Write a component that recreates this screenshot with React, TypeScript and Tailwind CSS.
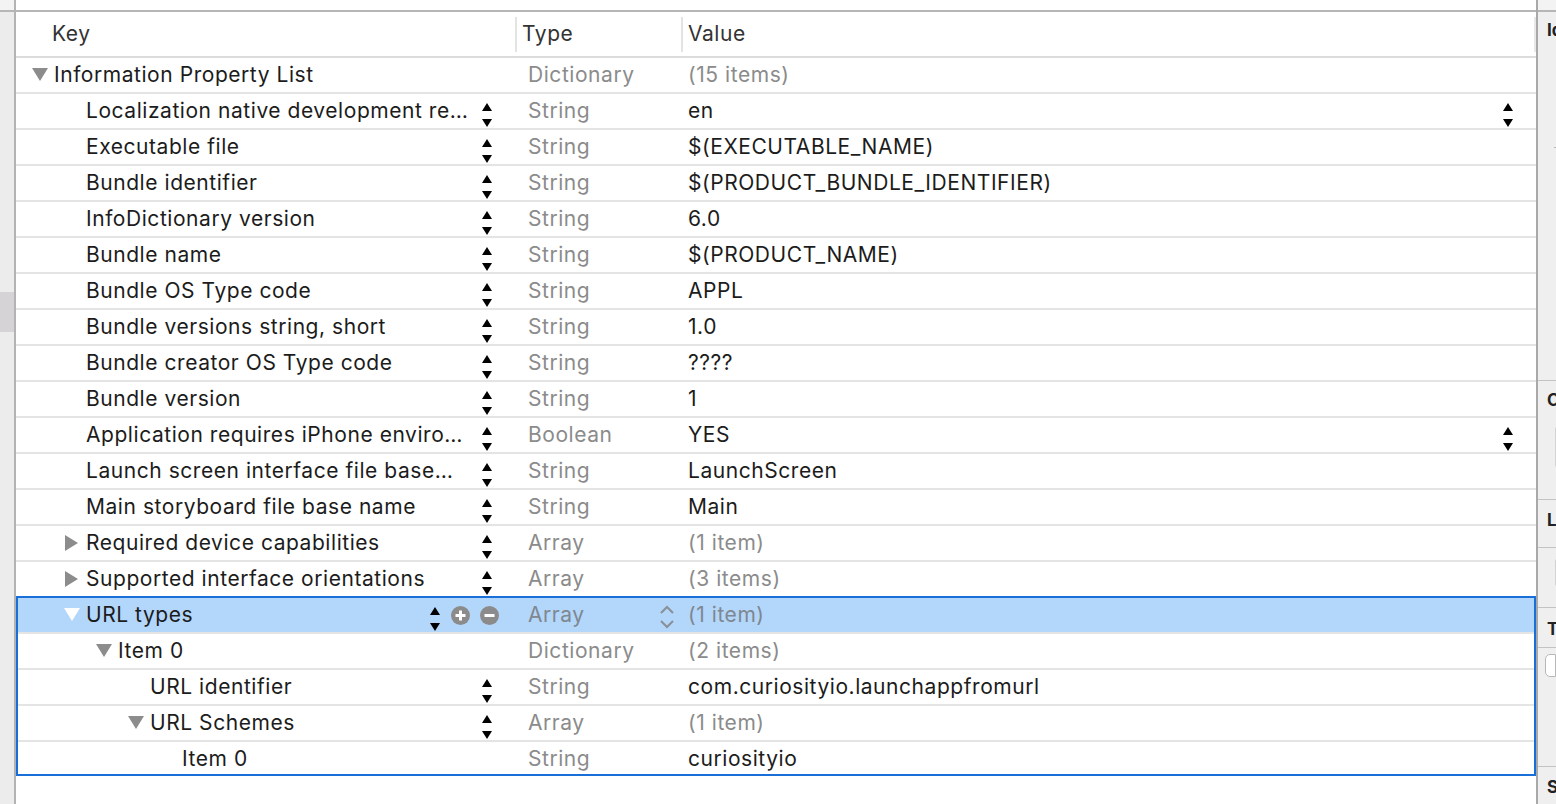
import React from "react";

type Row = {
    level: number;
    label: string;
    type: string;
    value: string;
    gray?: boolean;
    toggle?: "down" | "right";
    stepper?: boolean;
    valueStepper?: boolean;
};

const topRows: Row[] = [
    { level: 0, label: "Information Property List", type: "Dictionary", value: "(15 items)", gray: true, toggle: "down" },
    { level: 1, label: "Localization native development re…", type: "String", value: "en", stepper: true, valueStepper: true },
    { level: 1, label: "Executable file", type: "String", value: "$(EXECUTABLE_NAME)", stepper: true },
    { level: 1, label: "Bundle identifier", type: "String", value: "$(PRODUCT_BUNDLE_IDENTIFIER)", stepper: true },
    { level: 1, label: "InfoDictionary version", type: "String", value: "6.0", stepper: true },
    { level: 1, label: "Bundle name", type: "String", value: "$(PRODUCT_NAME)", stepper: true },
    { level: 1, label: "Bundle OS Type code", type: "String", value: "APPL", stepper: true },
    { level: 1, label: "Bundle versions string, short", type: "String", value: "1.0", stepper: true },
    { level: 1, label: "Bundle creator OS Type code", type: "String", value: "????", stepper: true },
    { level: 1, label: "Bundle version", type: "String", value: "1", stepper: true },
    { level: 1, label: "Application requires iPhone enviro…", type: "Boolean", value: "YES", stepper: true, valueStepper: true },
    { level: 1, label: "Launch screen interface file base…", type: "String", value: "LaunchScreen", stepper: true },
    { level: 1, label: "Main storyboard file base name", type: "String", value: "Main", stepper: true },
    { level: 1, label: "Required device capabilities", type: "Array", value: "(1 item)", gray: true, toggle: "right", stepper: true },
    { level: 1, label: "Supported interface orientations", type: "Array", value: "(3 items)", gray: true, toggle: "right", stepper: true },
];

const urlRows: Row[] = [
    { level: 2, label: "Item 0", type: "Dictionary", value: "(2 items)", gray: true, toggle: "down" },
    { level: 3, label: "URL identifier", type: "String", value: "com.curiosityio.launchappfromurl", stepper: true },
    { level: 3, label: "URL Schemes", type: "Array", value: "(1 item)", gray: true, toggle: "down", stepper: true },
    { level: 4, label: "Item 0", type: "String", value: "curiosityio" },
];

const indent = ["pl-[16px]", "pl-[48px]", "pl-[80px]", "pl-[112px]", "pl-[144px]"];

const Stepper = ({ className = "" }: { className?: string }) => (
    <svg width="12" height="24" viewBox="0 0 12 24" className={`shrink-0 translate-y-[4px] ${className}`}>
        <path d="M1 8 L6 0 L11 8 Z" fill="#000" />
        <path d="M1 16 L6 24 L11 16 Z" fill="#000" />
    </svg>
);

const Toggle = ({ dir, color = "#8c8c8c" }: { dir?: "down" | "right"; color?: string }) => (
    <span className="w-[22px] shrink-0 flex items-center">
        {dir === "down" && (
            <svg width="16" height="14" viewBox="0 0 16 14">
                <polygon points="0,0 16,0 8,13" fill={color} />
            </svg>
        )}
        {dir === "right" && (
            <svg width="14" height="16" viewBox="0 0 14 16" className="ml-[1px]">
                <polygon points="0,0 13,8 0,16" fill={color} />
            </svg>
        )}
    </span>
);

const RoundBtn = ({ minus }: { minus?: boolean }) => (
    <svg width="19" height="19" viewBox="0 0 19 19" className="shrink-0">
        <circle cx="9.5" cy="9.5" r="9.5" fill="#8b8b8b" />
        <path d="M4.5 9.5 H14.5" stroke="#fff" strokeWidth="3" />
        {!minus && <path d="M9.5 4.5 V14.5" stroke="#fff" strokeWidth="3" />}
    </svg>
);

const TableRow = ({ row, last }: { row: Row; last?: boolean }) => (
    <div className={`flex ${last ? "h-[34px]" : "h-[36px] border-b-2 border-[#e4e4e4]"}`}>
        <div className={`w-[499px] shrink-0 flex items-center ${indent[row.level]}`}>
            <Toggle dir={row.toggle} />
            <span className="flex-1 min-w-0 truncate text-[#1c1c1c]">{row.label}</span>
            {row.stepper && <Stepper className="ml-2 mr-[22px]" />}
        </div>
        <div className="w-[166px] shrink-0 flex items-center pl-[13px] text-[#8b8b8b]">{row.type}</div>
        <div className="flex-1 min-w-0 flex items-center pl-[7px]">
            <span className={`flex-1 truncate ${row.gray ? "text-[#8b8b8b]" : "text-[#1c1c1c]"}`}>{row.value}</span>
            {row.valueStepper && <Stepper className="mr-[22px]" />}
        </div>
    </div>
);

const SelectedRow = () => (
    <div className="flex h-[36px] border-b-2 border-[#e4e4e4] bg-[#b3d6fb]">
        <div className="w-[499px] shrink-0 flex items-center pl-[48px]">
            <Toggle dir="down" color="#ffffff" />
            <span className="flex-1 min-w-0 truncate text-[#1c1c1c]">URL types</span>
            <div className="flex items-center gap-[10px] mr-[16px]">
                <Stepper />
                <div className="flex items-center gap-[10px]">
                    <RoundBtn />
                    <RoundBtn minus />
                </div>
            </div>
        </div>
        <div className="w-[166px] shrink-0 flex items-center pl-[13px] text-[#7f8790]">
            <span className="flex-1">Array</span>
            <svg width="16" height="26" viewBox="0 0 16 26" className="mr-[6px] translate-y-[2px]">
                <polyline points="2,9 8,3 14,9" fill="none" stroke="#8a8f96" strokeWidth="2" />
                <polyline points="2,17 8,23 14,17" fill="none" stroke="#8a8f96" strokeWidth="2" />
            </svg>
        </div>
        <div className="flex-1 flex items-center pl-[7px] text-[#7f8790]">(1 item)</div>
    </div>
);

const SidePanel = () => (
    <div className="w-[18px] shrink-0 flex flex-col bg-[#efefef] overflow-hidden font-bold text-[17px] tracking-normal text-[#222] whitespace-nowrap">
        <div className="h-[10px] shrink-0 bg-[#f3f3f3]" />
        <div className="h-[2px] shrink-0 bg-[#b6b6b6]" />
        <div className="h-[368px] shrink-0 relative pl-[9px] pt-[8px] leading-[20px]">
            Identity
            <div className="absolute left-[16px] top-[135px] w-[2px] h-[1px] bg-[#b9b9b9]" />
        </div>
        <div className="h-[1px] shrink-0 bg-[#c4c4c4]" />
        <div className="h-[118px] shrink-0 pl-[9px] pt-[9px] leading-[20px]">
            Class
            <div className="mt-[17px] ml-[8px] h-[40px] border border-[#d2d2d2] bg-[#f7f7f7] rounded-l-[3px]" />
        </div>
        <div className="h-[1px] shrink-0 bg-[#c4c4c4]" />
        <div className="h-[47px] shrink-0 pl-[9px] pt-[10px] leading-[20px]">Localization</div>
        <div className="h-[1px] shrink-0 bg-[#c4c4c4]" />
        <div className="h-[59px] shrink-0 pt-[11px]">
            <div className="ml-[17px] h-[27px] border border-[#d2d2d2] bg-[#f7f7f7] rounded-l-[3px]" />
        </div>
        <div className="h-[1px] shrink-0 bg-[#c4c4c4]" />
        <div className="h-[39px] shrink-0 pl-[9px] pt-[11px] leading-[20px]">Target Membership</div>
        <div className="h-[1px] shrink-0 bg-[#c4c4c4]" />
        <div className="h-[118px] shrink-0 pt-[6px]">
            <div className="ml-[7px] h-[23px] border border-[#b8b8b8] bg-white rounded-l-[5px]" />
        </div>
        <div className="h-[1px] shrink-0 bg-[#c4c4c4]" />
        <div className="pl-[9px] pt-[10px] leading-[20px]">Source Control</div>
    </div>
);

const App: React.FC = () => {
    return (
        <div
            className="w-[1556px] h-[804px] flex overflow-hidden bg-white text-[21px] leading-[28px] tracking-[0.55px]"
            style={{ fontFamily: "Inter, 'Noto Sans', sans-serif" }}
        >
            {/* Left gutter */}
            <div className="w-[14px] shrink-0 flex flex-col bg-[#ececec]">
                <div className="h-[10px] bg-[#f3f3f3]" />
                <div className="h-[2px] bg-[#b6b6b6]" />
                <div className="h-[280px]" />
                <div className="h-[40px] bg-[#d5d3d5]" />
            </div>
            <div className="w-[2px] shrink-0 bg-[#b3b3b3]" />

            {/* Plist table */}
            <div className="flex-1 min-w-0 flex flex-col">
                <div className="h-[10px] shrink-0" />
                <div className="h-[2px] shrink-0 bg-[#b6b6b6]" />
                <div className="h-[46px] shrink-0 flex border-b-2 border-[#dcdcdc] text-[#333]">
                    <div className="w-[499px] shrink-0 flex items-center pl-[36px]">Key</div>
                    <div className="w-[166px] shrink-0 flex items-center">
                        <div className="w-[2px] h-[35px] bg-[#e3e3e3] mr-[5px]" />
                        Type
                    </div>
                    <div className="flex-1 flex items-center">
                        <div className="w-[2px] h-[35px] bg-[#e3e3e3] mr-[5px]" />
                        <span className="flex-1">Value</span>
                        <div className="w-[2px] h-[35px] bg-[#e8e8e8]" />
                    </div>
                </div>

                {topRows.map((row, i) => (
                    <TableRow key={i} row={row} />
                ))}

                <div className="relative">
                    <SelectedRow />
                    {urlRows.map((row, i) => (
                        <TableRow key={i} row={row} last={i === urlRows.length - 1} />
                    ))}
                    <div className="pointer-events-none absolute -top-[2px] inset-x-0 bottom-0 border-2 border-[#1a6ed8]" />
                </div>
            </div>

            <div className="w-[2px] shrink-0 bg-[#a9a9a9]" />
            <SidePanel />
        </div>
    );
};

export default App;
